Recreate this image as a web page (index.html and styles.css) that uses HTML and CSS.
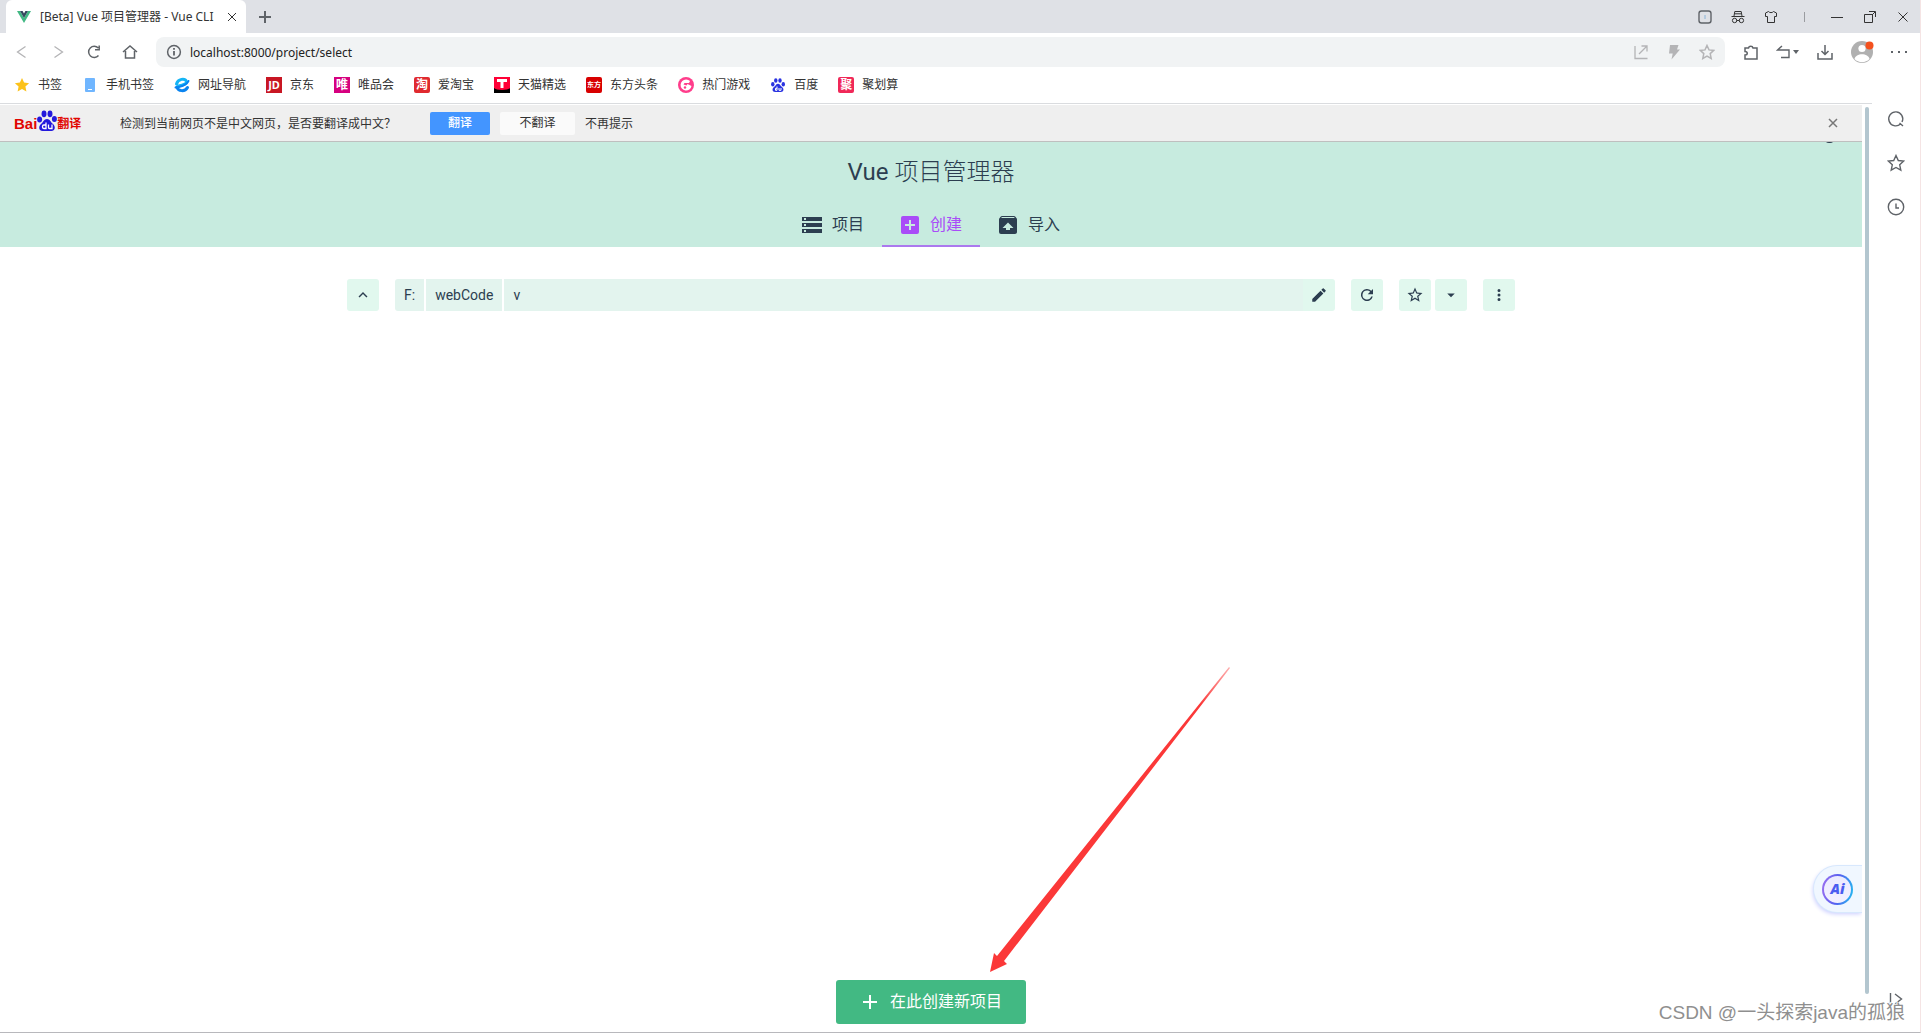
FILE: index.html
```html
<!DOCTYPE html>
<html lang="zh-CN">
<head>
<meta charset="utf-8">
<title>[Beta] Vue 项目管理器 - Vue CLI</title>
<link rel="stylesheet" href="styles.css">
</head>
<body>
<header class="chrome">
  <div class="tabstrip">
    <div class="tab">
      <svg class="i16" viewBox="0 0 16 16"><path fill="#42b883" d="M1 2h3l4 7 4-7h3L8 14z"/><path fill="#35495e" d="M4 2h2.600L8 4.500 9.400 2H12L8 9z"/></svg>
      <span class="tab-title">[Beta] Vue 项目管理器 - Vue CLI</span>
      <button class="icon-btn" aria-label="关闭标签页"><svg class="i16 line dark" viewBox="0 0 16 16"><path d="M4 4l8 8M12 4l-8 8"/></svg></button>
    </div>
    <button class="icon-btn new-tab" aria-label="新建标签页"><svg class="i16 line" viewBox="0 0 16 16"><path stroke-width="2" d="M8 2v12M2 8h12"/></svg></button>
    <div class="window-tools">
      <button class="icon-btn" aria-label="窗口"><svg class="i16 line" viewBox="0 0 16 16"><rect x="2" y="2" width="12" height="12" rx="2.500" stroke-width="1.400"/><path stroke="#8ab4d8" d="M8 6v4"/></svg></button>
      <button class="icon-btn" aria-label="隐身"><svg class="i16 line dark" viewBox="0 0 16 16"><path d="M1.500 7.500h13M4 7l.8-4.500h6.400L12 7M6.500 11.500h3M4.500 4.800h7"/><circle cx="4.600" cy="11.500" r="2.200"/><circle cx="11.400" cy="11.500" r="2.200"/></svg></button>
      <button class="icon-btn" aria-label="皮肤"><svg class="i16 line dark" viewBox="0 0 16 16"><path d="M5.500 2.500c1 1.500 4 1.500 5 0L13.500 4v3.500h-2v6h-7v-6h-2V4z"/></svg></button>
      <span class="bar"></span>
      <button class="icon-btn" aria-label="最小化"><svg class="i16 line dark" viewBox="0 0 16 16"><path d="M2 8.500h12"/></svg></button>
      <button class="icon-btn" aria-label="还原"><svg class="i16 line dark" viewBox="0 0 16 16"><path d="M2.500 5.500h8v8h-8zM7 2.500h6.500V8M10 6l3-3"/></svg></button>
      <button class="icon-btn" aria-label="关闭"><svg class="i16 line dark" viewBox="0 0 16 16"><path d="M3.500 3.500l9 9M12.500 3.500l-9 9"/></svg></button>
    </div>
  </div>

  <div class="navbar">
    <div class="nav-tools">
      <button class="icon-btn" aria-label="后退"><svg class="i16 line pale" viewBox="0 0 16 16"><path stroke-width="1.300" d="M11.500 2.500L3.500 8l8 5.500"/></svg></button>
      <button class="icon-btn" aria-label="前进"><svg class="i16 line pale" viewBox="0 0 16 16"><path stroke-width="1.300" d="M4.500 2.500l8 5.500-8 5.500"/></svg></button>
      <button class="icon-btn" aria-label="刷新"><svg class="i16 line" viewBox="0 0 16 16"><path stroke-width="1.500" d="M12.500 11.500A5.600 5.600 0 1 1 12.300 4M13.200 1.500v4.300H9"/></svg></button>
      <button class="icon-btn" aria-label="主页"><svg class="i16 line" viewBox="0 0 16 16"><path stroke-width="1.500" d="M1 8l7-6 7 6M3.500 7v7h9V7"/></svg></button>
    </div>
    <div class="address">
      <svg class="i16 line" viewBox="0 0 16 16"><circle cx="8" cy="8" r="6.400" stroke-width="1.500"/><path stroke-width="1.800" d="M8 7v4.500M8 4v1.800"/></svg>
      <input class="url" aria-label="地址" value="localhost:8000/project/select">
      <div class="address-tools">
        <button class="icon-btn" aria-label="分享"><svg class="i16 line pale" viewBox="0 0 16 16"><path stroke-width="1.300" d="M2 2v12.500h12.500M6 10l8-8M8.500 2H14v5.500"/></svg></button>
        <button class="icon-btn" aria-label="加速"><svg class="i16 pale-fill" viewBox="0 0 16 16"><path d="M4 1h8.500L11 5.500h3L5.500 15.500l1.200-6H3z"/></svg></button>
        <button class="icon-btn" aria-label="收藏"><svg class="i16 line pale" viewBox="0 0 16 16"><path stroke-width="1.500" d="M8 1.500l2 4.400 4.800.5-3.600 3.200 1 4.800L8 12l-4.200 2.400 1-4.800L1.200 6.400 6 5.900z"/></svg></button>
      </div>
    </div>
    <div class="ext-tools">
      <button class="icon-btn" aria-label="扩展"><svg class="i16 line" viewBox="0 0 16 16"><path stroke-width="1.500" d="M2 4h3.500a2.300 2.300 0 0 1 4.500 0h4v11H2v-4c3 0 3-3.500 0-3.500z"/></svg></button>
      <button class="icon-btn undo" aria-label="恢复"><svg class="undo-icon line" viewBox="0 0 24 16"><path stroke-width="1.400" d="M6 2L1.500 6H13v7.500H5"/><path fill="#5f6368" stroke="none" d="M17 6h6l-3 4z"/></svg></button>
      <button class="icon-btn" aria-label="下载"><svg class="i16 line" viewBox="0 0 16 16"><path stroke-width="1.500" d="M1 9v6h14V9M8 1v9M4.500 7L8 10.500 11.500 7"/></svg></button>
      <button class="icon-btn avatar" aria-label="用户"><svg class="i24" viewBox="0 0 24 24"><circle cx="12" cy="12" r="11" fill="#b0b0b0"/><circle cx="12" cy="8.500" r="3.600" fill="#fff"/><path fill="#fff" d="M4.500 19c1-6.500 14-6.500 15 0a10.500 10.500 0 0 1-15 0z"/><circle cx="19.500" cy="5.500" r="4" fill="#f4511e"/></svg></button>
      <button class="icon-btn" aria-label="更多"><svg class="i16" viewBox="0 0 16 16" fill="#5f6368"><path d="M0 7h2v2H0zM7 7h2v2H7zM14 7h2v2h-2z"/></svg></button>
    </div>
  </div>

  <nav class="bookmarks">
    <a href="#"><svg class="i16" viewBox="0 0 16 16"><path fill="#fcc21b" d="M8 1l2.100 4.600 5 .6-3.700 3.400 1 4.900L8 12l-4.400 2.500 1-4.900L.9 6.200l5-.6z"/></svg>书签</a>
    <a href="#"><svg class="i16" viewBox="0 0 16 16"><rect x="3" y="1" width="10" height="14" rx="1" fill="#70b6ff"/><path fill="#fff" d="M6 12h4v1H6z"/></svg>手机书签</a>
    <a href="#"><svg class="i16" viewBox="0 0 16 16" fill="none" stroke-linecap="round"><path stroke="#0a84f0" stroke-width="3" d="M13.500 10.500C11 15 4 14.500 3 10"/><path stroke="#15b5f5" stroke-width="3" d="M2.500 7C4 1.500 11 1 12.500 4.500c.7 2-3 3.500-8 4.500"/><path stroke="#0a84f0" stroke-width="2" d="M1.500 10.500C5 10.500 13 8 14.500 4"/></svg>网址导航</a>
    <a href="#"><span class="fav jd">JD</span>京东</a>
    <a href="#"><span class="fav vip">唯</span>唯品会</a>
    <a href="#"><span class="fav tao">淘</span>爱淘宝</a>
    <a href="#"><svg class="i16" viewBox="0 0 16 16"><path fill="#ff0036" d="M0 0h16v16H0z"/><path fill="#fff" d="M3 2h10v3H9.500v6h-3V5H3z"/><path d="M0 11c2 2.500 14 2.500 16 0v5H0z"/></svg>天猫精选</a>
    <a href="#"><span class="fav east">东方</span>东方头条</a>
    <a href="#"><svg class="i16" viewBox="0 0 16 16"><circle cx="8" cy="8" r="8" fill="#ff3d8b"/><path fill="#fff" d="M8 2.500a5.500 5.500 0 1 0 5.500 6.500L9.500 7l-1 1.500-3-1 1-1.500h4.500l1-2A5.500 5.500 0 0 0 8 2.500z"/><circle cx="7" cy="10.500" r="1.200" fill="#ff3d8b"/></svg>热门游戏</a>
    <a href="#"><svg class="i16" viewBox="0 0 16 16" fill="#2932e1"><ellipse cx="2.800" cy="7.200" rx="1.700" ry="2.200"/><ellipse cx="5.800" cy="3.500" rx="1.700" ry="2.300"/><ellipse cx="10" cy="3.500" rx="1.700" ry="2.300"/><ellipse cx="13.300" cy="7.200" rx="1.700" ry="2.200"/><path d="M8 6.800c2 0 2.300 2 4 3.300 2.500 2 1.500 4.900-1 4.900H5c-2.500 0-3.500-2.900-1-4.900C5.700 8.800 6 6.800 8 6.800z"/><path fill="none" stroke="#fff" d="M7 9.500v3.800H5.500v-2H7M9 11v2.300h2V11"/></svg>百度</a>
    <a href="#"><span class="fav ju">聚</span>聚划算</a>
  </nav>
</header>

<div class="body">
  <div class="page">
    <div class="translate">
      <div class="logo">
        <span class="logo-bai">Bai</span>
        <svg class="paw" viewBox="0 0 20 22" fill="#2319dc"><ellipse cx="2.600" cy="9.500" rx="2.500" ry="3"/><ellipse cx="7" cy="3.800" rx="2.500" ry="3.400"/><ellipse cx="13" cy="3.800" rx="2.500" ry="3.400"/><ellipse cx="17.400" cy="9" rx="2.500" ry="3"/><path d="M10 9c3 0 3.500 3 6 5 3 2.500 2 7-1.500 7h-9C2 21 1 16.500 4 14c2.500-2 3-5 6-5z"/><path fill="none" stroke="#fff" stroke-width="1.300" d="M9 12.500v6H6.800c-1.800 0-1.800-3.500 0-3.500H9M11.500 14.500v3q0 1 1 1H15v-4"/></svg>
        <span class="logo-fanyi">翻译</span>
      </div>
      <span class="ask">检测到当前网页不是中文网页，是否要翻译成中文？</span>
      <button class="tr-btn yes">翻译</button>
      <button class="tr-btn no">不翻译</button>
      <a class="never" href="#">不再提示</a>
      <button class="icon-btn tr-close" aria-label="关闭翻译栏"><svg class="i16 line" viewBox="0 0 16 16"><path stroke="#777" stroke-width="1.500" d="M4 4l8 8M12 4l-8 8"/></svg></button>
    </div>

    <div class="hero">
      <span class="peek"></span>
      <h1><span class="latin">Vue</span> 项目管理器</h1>
      <nav class="tabs">
        <a href="#"><svg class="i24" viewBox="0 0 24 24"><path d="M2 20h20v-4H2v4zm2-3h2v2H4v-2zM2 4v4h20V4H2zm4 3H4V5h2v2zm-4 7h20v-4H2v4zm2-3h2v2H4v-2z"/></svg>项目</a>
        <a href="#" class="active"><svg class="i24" viewBox="0 0 24 24"><path d="M19 3H5a2 2 0 0 0-2 2v14a2 2 0 0 0 2 2h14a2 2 0 0 0 2-2V5a2 2 0 0 0-2-2zm-2 10h-4v4h-2v-4H7v-2h4V7h2v4h4v2z"/></svg>创建</a>
        <a href="#"><svg class="i24" viewBox="0 0 24 24"><path d="M20.550 5.220l-1.390-1.680A1.510 1.510 0 0 0 18 3H6c-.470 0-.880.210-1.150.550L3.460 5.220C3.170 5.570 3 6.010 3 6.500V19a2 2 0 0 0 2 2h14c1.100 0 2-.900 2-2V6.500c0-.490-.170-.930-.450-1.280zM12 9.500l5.500 5.500H14v2h-4v-2H6.500L12 9.500zM5.120 5l.820-1h12l.930 1H5.120z"/></svg>导入</a>
      </nav>
    </div>

    <main class="content">
      <div class="toolbar">
        <button class="sq" aria-label="上级目录"><svg class="i18" viewBox="0 0 24 24"><path d="M12 8l-6 6 1.410 1.410L12 10.830l4.590 4.580L18 14z"/></svg></button>
        <div class="path">
          <button class="seg">F:</button>
          <button class="seg">webCode</button>
          <button class="seg last">v</button>
          <button class="sq edit" aria-label="编辑路径"><svg class="i18" viewBox="0 0 24 24"><path d="M3 17.250V21h3.750L17.810 9.940l-3.750-3.750L3 17.250zM20.710 7.040a1 1 0 0 0 0-1.410l-2.340-2.340a1 1 0 0 0-1.410 0l-1.830 1.830 3.750 3.750 1.830-1.830z"/></svg></button>
        </div>
        <button class="sq" aria-label="刷新目录"><svg class="i18" viewBox="0 0 24 24"><path d="M17.650 6.350A8 8 0 1 0 19.730 14h-2.080A6 6 0 1 1 12 6c1.660 0 3.140.690 4.220 1.780L13 11h7V4l-2.350 2.350z"/></svg></button>
        <div class="pair">
          <button class="sq" aria-label="收藏目录"><svg class="i18" viewBox="0 0 24 24"><path d="M22 9.240l-7.190-.620L12 2 9.190 8.630 2 9.240l5.460 4.730L5.820 21 12 17.270 18.180 21l-1.630-7.030L22 9.240zM12 15.400l-3.760 2.270 1-4.280-3.320-2.880 4.380-.380L12 6.100l1.710 4.040 4.380.380-3.320 2.880 1 4.280L12 15.400z"/></svg></button>
          <button class="sq" aria-label="收藏列表"><svg class="i18" viewBox="0 0 24 24"><path d="M7 10l5 5 5-5z"/></svg></button>
        </div>
        <button class="sq" aria-label="更多操作"><svg class="i18" viewBox="0 0 24 24"><path d="M12 8a2 2 0 1 0 0-4 2 2 0 0 0 0 4zm0 2a2 2 0 1 0 0 4 2 2 0 0 0 0-4zm0 6a2 2 0 1 0 0 4 2 2 0 0 0 0-4z"/></svg></button>
      </div>
      <div class="actions">
        <button class="create"><svg class="i24" viewBox="0 0 24 24"><path d="M19 13h-6v6h-2v-6H5v-2h6V5h2v6h6v2z"/></svg>在此创建新项目</button>
        <svg class="arrow" viewBox="0 0 240 305"><defs><linearGradient id="fade" gradientUnits="userSpaceOnUse" x1="240" y1="0" x2="210" y2="38"><stop offset="0" stop-color="#fb3838" stop-opacity=".4"/><stop offset="1" stop-color="#fb3838"/></linearGradient></defs><path fill="url(#fade)" d="M0 305L4 286l3 3L239 0l1 1L14 294l3 3z"/></svg>
      </div>
      <button class="ai" aria-label="AI 助手"><span class="ai-ring"><b>Ai</b></span></button>
    </main>
  </div>
  <div class="scroll"></div>
  <aside class="side">
    <button class="icon-btn" aria-label="搜索"><svg class="i18 line" viewBox="0 0 18 18"><path stroke-width="1.400" d="M13.500 14A7 7 0 1 1 15 12M12.500 13l3.500 3"/></svg></button>
    <button class="icon-btn" aria-label="收藏夹"><svg class="i18 line" viewBox="0 0 18 18"><path stroke-width="1.400" d="M9 1.500l2.300 5 5.400.6-4 3.700 1.100 5.400L9 13.500l-4.800 2.700 1.100-5.400-4-3.700 5.400-.6z"/></svg></button>
    <button class="icon-btn" aria-label="历史"><svg class="i18 line" viewBox="0 0 18 18"><circle cx="9" cy="9" r="7.700" stroke-width="1.400"/><path stroke-width="1.400" d="M9 5.500V10h3"/></svg></button>
    <button class="icon-btn collapse" aria-label="收起侧栏"><svg class="i18 line" viewBox="0 0 18 18"><path stroke-width="1.400" d="M3.500 3v12M8 4l6.500 5L8 14"/></svg></button>
  </aside>
</div>
<div class="watermark">CSDN @一头探索java的孤狼</div>
</body>
</html>
```
FILE: styles.css
```css
* { box-sizing: border-box; }
body {
  margin: 0;
  min-height: 100vh;
  display: flex;
  flex-direction: column;
  position: relative;
  background: #fff;
  border-bottom: 1px solid #b8b8bc;
  border-right: 1px solid #f5e4e4;
  font: 12px/16px "Noto Sans", "Noto Sans CJK SC", sans-serif;
  color: #333;
}
button { border: 0; padding: 0; margin: 0; background: none; font: inherit; color: inherit; }
a { color: inherit; text-decoration: none; }
svg { display: block; flex: none; }
.i16 { width: 16px; height: 16px; }
.i18 { width: 18px; height: 18px; }
.i24 { width: 24px; height: 24px; }
.line { fill: none; stroke: #5f6368; }
.line.dark { stroke: #333; }
.line.pale { stroke: #b4b4b6; }
.pale-fill { fill: #b4b4b6; }
.icon-btn { display: flex; align-items: center; justify-content: center; flex: none; }

/* browser frame */
.tabstrip { display: flex; align-items: center; height: 33px; padding-left: 6px; background: #dfe1e6; }
.tab {
  display: flex;
  align-items: center;
  gap: 8px;
  width: 240px;
  height: 33px;
  padding: 0 6px 0 10px;
  border-radius: 6px 6px 0 0;
  background: #fff;
}
.tab-title { flex: 1; white-space: nowrap; }
.new-tab { margin-left: 11px; }
.window-tools { display: flex; align-items: center; gap: 17px; margin-left: auto; padding-right: 9px; }
.bar { width: 16px; height: 10px; background: linear-gradient(#9a9ca0, #9a9ca0) center / 1px 10px no-repeat; }
.navbar { display: flex; align-items: center; height: 38px; padding: 0 13px 0 14px; }
.nav-tools { display: flex; gap: 20px; width: 142px; }
.address {
  flex: 1;
  display: flex;
  align-items: center;
  gap: 8px;
  height: 30px;
  padding: 0 10px;
  border-radius: 8px;
  background: #f1f3f4;
}
.url { flex: 1; height: 24px; padding: 0; border: 0; background: none; outline: 0; font: 12px/16px "Noto Sans", sans-serif; color: #222; }
.address-tools { display: flex; gap: 17px; }
.ext-tools { display: flex; align-items: center; gap: 17px; padding-left: 18px; }
.undo-icon { width: 24px; height: 16px; }
.bookmarks {
  display: flex;
  align-items: center;
  gap: 20px;
  height: 33px;
  margin-right: 48px;
  padding: 0 0 4px 14px;
  border-bottom: 1px solid #dadcdf;
}
.bookmarks a { display: flex; align-items: center; gap: 8px; white-space: nowrap; }
.fav {
  width: 16px;
  height: 16px;
  overflow: hidden;
  color: #fff;
  font-size: 12px;
  font-weight: 700;
  line-height: 16px;
  text-align: center;
}
.jd { background: #c81623; font-size: 11px; }
.vip { background: #d6007f; }
.tao { background: #e02a2f; border-radius: 2px; }
.east { background: #d80000; border-radius: 2px; font-size: 7px; }
.ju { background: #f02858; border-radius: 2px; }

/* page area */
.body { flex: 1; display: flex; }
.page { flex: 1; display: flex; flex-direction: column; padding-top: 1px; }
.scroll { width: 4px; margin: 3px 3px 38px; border-radius: 2px; background: #b3c6cf; }
.side { display: flex; flex-direction: column; align-items: center; gap: 26px; width: 48px; padding: 6px 0 24px; }
.collapse { margin-top: auto; }

.translate { display: flex; align-items: center; height: 37px; padding: 0 21px 0 14px; background: #efefef; border-bottom: 1px solid #bfbfbf; }
.logo { display: flex; align-items: flex-end; width: 106px; height: 26px; padding-bottom: 4px; }
.logo-bai { font: 700 15px/16px "Liberation Sans", sans-serif; color: #e10601; }
.paw { width: 20px; height: 22px; }
.logo-fanyi { font-size: 12px; font-weight: 700; line-height: 16px; color: #e10601; }
.ask, .never { padding-top: 2px; white-space: nowrap; }
.ask { width: 310px; }
.tr-btn { height: 23px; border-radius: 2px; text-align: center; }
.yes { width: 60px; background: #4395ff; color: #fff; font-weight: 500; }
.no { width: 75px; margin: 0 10px; background: #fafafa; }
.tr-close { margin-left: auto; }

.hero { position: relative; display: flex; flex-direction: column; align-items: center; height: 105px; overflow: hidden; background: #c7ebdf; color: #2c3e50; }
.peek { position: absolute; top: -3px; right: 28px; width: 9px; height: 4px; border-radius: 0 0 4px 4px; background: #2c3e50; }
h1 { margin: 14px 0 15px; font: 300 24px/32px Roboto, "Noto Sans CJK SC", sans-serif; }
.latin { font-weight: 400; }
.tabs { display: flex; font: 16px/24px Roboto, "Noto Sans CJK SC", sans-serif; }
.tabs a { display: flex; align-items: center; gap: 8px; height: 44px; padding: 2px 18px 0 16px; border-bottom: 2px solid transparent; }
.tabs .active { color: #a94cf8; border-color: #ab79ee; }
.tabs svg, .sq svg, .create svg { fill: currentColor; }

.content { flex: 1; position: relative; display: flex; flex-direction: column; align-items: center; padding: 32px 16px 8px; }
.toolbar { display: flex; gap: 16px; width: 100%; max-width: 1168px; color: #2c3e50; }
.sq { display: flex; align-items: center; justify-content: center; width: 32px; height: 32px; border-radius: 3px; background: #e1f8ee; }
.path { flex: 1; display: flex; gap: 2px; overflow: hidden; border-radius: 3px; }
.seg { height: 32px; padding: 0 9px; background: #e3f4ee; font: 14px/20px Roboto, sans-serif; }
.last { flex: 1; text-align: left; margin-right: -2px; }
.edit { border-radius: 0; }
.pair { display: flex; gap: 4px; }
.actions { position: relative; margin-top: auto; }
.create { display: flex; align-items: center; gap: 8px; height: 44px; padding: 0 24px 0 22px; border-radius: 3px; background: #42b983; color: #fff; font: 16px/24px Roboto, "Noto Sans CJK SC", sans-serif; }
.arrow { position: absolute; left: 154px; bottom: 52px; width: 240px; height: 305px; }
.ai {
  position: absolute;
  right: 0;
  bottom: 120px;
  display: flex;
  align-items: center;
  width: 48px;
  height: 46px;
  padding-left: 8px;
  border-radius: 23px 0 0 23px;
  background: #f0f7ff;
  box-shadow: 0 0 0 1px #d8e8fd, -1px 2px 4px #c9ccff;
  clip-path: inset(-8px 0 -8px -8px);
}
.ai-ring {
  display: flex;
  align-items: center;
  justify-content: center;
  width: 31px;
  height: 31px;
  border: 2px solid transparent;
  border-radius: 50%;
  background: linear-gradient(#ecebff, #f2f0ff) padding-box, linear-gradient(100deg, #a070f0, #5560f0 50%, #20c0f0) border-box;
  font: italic 700 14px/16px "Open Sans", sans-serif;
  color: #4a5cf0;
}
.watermark {
  position: absolute;
  right: 15px;
  bottom: 7px;
  font: 19px/24px "Liberation Sans", "Noto Sans CJK SC", sans-serif;
  color: #8f8f8f;
  text-shadow: -1px -1px 0 #fff;
}
```
